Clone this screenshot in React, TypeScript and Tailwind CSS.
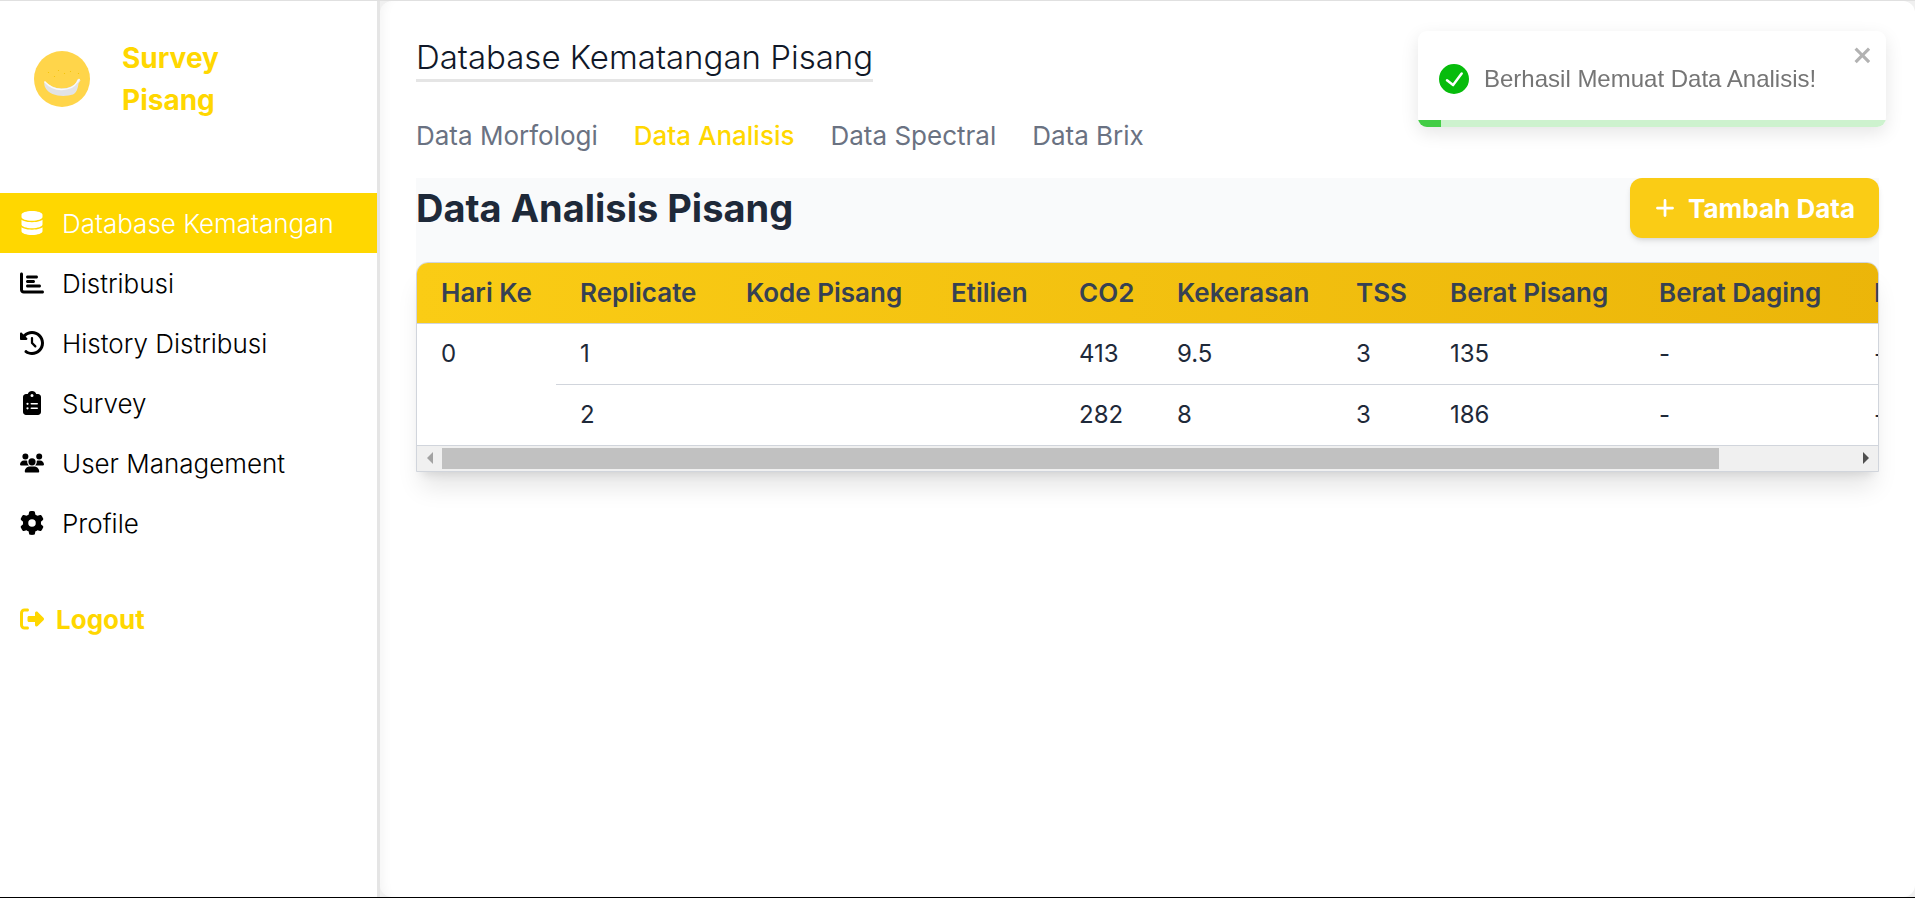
import { useState } from 'react'
import {
  FaChartBar, FaClipboardList, FaClockRotateLeft, FaDatabase,
  FaGear, FaPlus, FaRightFromBracket, FaUsers,
} from 'react-icons/fa6'

const menu = [
  { nama: 'Database Kematangan', icon: FaDatabase },
  { nama: 'Distribusi', icon: FaChartBar },
  { nama: 'History Distribusi', icon: FaClockRotateLeft },
  { nama: 'Survey', icon: FaClipboardList },
  { nama: 'User Management', icon: FaUsers },
  { nama: 'Profile', icon: FaGear },
]

const tabs = ['Data Morfologi', 'Data Analisis', 'Data Spectral', 'Data Brix']

const kolom = [
  { label: 'Hari Ke', lebar: 139 },
  { label: 'Replicate', lebar: 166 },
  { label: 'Kode Pisang', lebar: 205 },
  { label: 'Etilien', lebar: 128 },
  { label: 'CO2', lebar: 98 },
  { label: 'Kekerasan', lebar: 179 },
  { label: 'TSS', lebar: 94 },
  { label: 'Berat Pisang', lebar: 209 },
  { label: 'Berat Daging', lebar: 215 },
  { label: 'Berat Kulit', lebar: 185 },
]

const dataAnalisis = [
  { hari: 0, baris: [
    ['1', '', '', '413', '9.5', '3', '135', '-', '-'],
    ['2', '', '', '282', '8', '3', '186', '-', '-'],
  ] },
]

function Logo() {
  return (
    <svg viewBox="0 0 56 56" className="size-14 shrink-0" aria-hidden="true">
      <circle cx="28" cy="28" r="28" fill="#ffd54a" />
      <g fill="#f2c200">
        <circle cx="14.5" cy="21.5" r=".6" />
        <circle cx="24.5" cy="19.5" r=".6" />
        <circle cx="20.5" cy="25.5" r=".6" />
        <circle cx="30.5" cy="22.5" r=".6" />
        <circle cx="36.5" cy="20.5" r=".6" />
        <circle cx="44.5" cy="22.5" r=".6" />
      </g>
      <path d="M10.5 30.500C15 34.500 21 37.500 27.500 37.500C35 37.500 40.500 34.500 42.500 31L43.200 28.500L45.500 28L46.500 29.500L44.500 32.500C44 37 42.500 42 39 43.500C31 46 15.500 46 11 36C10.200 34 10 31.500 10.500 30.500Z" fill="#e2e3e6" />
      <path d="M10.5 30.500C15 35.500 21 38.500 27.500 38.500C35 38.500 40.500 35.500 43 31.500L45.500 28" fill="none" stroke="#fafafa" strokeWidth="1.4" />
    </svg>
  )
}

function Sidebar() {
  return (
    <aside className="w-[380px] shrink-0 border-r-[3px] border-[#e5e5e5] bg-white">
      <div className="flex items-center gap-8 px-[34px] pt-[36px]">
        <Logo />
        <p className="w-28 text-[28px] leading-[42px] font-bold text-[#ffd700]">Survey Pisang</p>
      </div>
      <nav className="mt-[72px]">
        {menu.map(({ nama, icon: Icon }, i) => (
          <a key={nama} href="#"
            className={`flex h-15 items-center gap-[18px] px-5 text-[26px] font-light ${i === 0 ? 'bg-[#ffd700] text-white' : 'text-black'}`}>
            <Icon className="size-6 shrink-0" />
            {nama}
          </a>
        ))}
      </nav>
      <button className="mt-9 flex h-15 items-center gap-3 px-5 text-[26px] font-bold text-[#ffd700]">
        <FaRightFromBracket className="size-6" />
        Logout
      </button>
    </aside>
  )
}

function TabelAnalisis() {
  return (
    <div className="overflow-hidden rounded-t-xl border border-gray-300 bg-white shadow-xl">
      <div className="overflow-hidden">
        <table className="w-[1618px] table-fixed border-collapse text-left text-[24px] whitespace-nowrap text-gray-800">
          <colgroup>
            {kolom.map((k) => <col key={k.label} style={{ width: k.lebar }} />)}
          </colgroup>
          <thead>
            <tr className="h-15 bg-linear-to-r from-[#facc15] to-[#eab308] text-[26px] text-gray-700">
              {kolom.map((k) => <th key={k.label} className="px-6 font-semibold">{k.label}</th>)}
            </tr>
          </thead>
          <tbody>
            {dataAnalisis.map((d) => d.baris.map((baris, i) => (
              <tr key={`${d.hari}-${i}`} className="h-[61px]">
                {i === 0 && (
                  <td rowSpan={d.baris.length} className="border-y border-gray-300 px-6 pt-3 align-top">{d.hari}</td>
                )}
                {baris.map((nilai, j) => (
                  <td key={j} className="border-y border-gray-300 px-6">{nilai}</td>
                ))}
              </tr>
            )))}
          </tbody>
        </table>
      </div>
      {/* Scroll horizontal */}
      <div className="flex h-[25px] items-center bg-[#f0f0f0]">
        <button aria-label="Geser kiri" className="flex h-full w-[25px] shrink-0 items-center justify-center">
          <svg viewBox="0 0 6 12" className="h-3 w-1.5" fill="#a3a3a3"><path d="M6 0v12L0 6z" /></svg>
        </button>
        <div className="h-[21px] flex-1">
          <div className="h-full w-[90.5%] bg-[#c1c1c1]" />
        </div>
        <button aria-label="Geser kanan" className="flex h-full w-[25px] shrink-0 items-center justify-center">
          <svg viewBox="0 0 6 12" className="h-3 w-1.5" fill="#505050"><path d="M0 0v12l6-6z" /></svg>
        </button>
      </div>
    </div>
  )
}

function Toast({ onClose }: { onClose: () => void }) {
  return (
    <div role="alert"
      className="fixed top-[31px] right-[29px] w-[468px] overflow-hidden rounded-[9px] bg-white font-['Liberation_Sans',sans-serif] shadow-[0_6px_18px_rgba(0,0,0,0.1)]">
      <div className="flex h-[89px] items-center gap-[15px] px-[21px] pt-[7px]">
        <svg viewBox="0 0 24 24" className="size-[30px] shrink-0" fill="#07bc0c">
          <path d="M12 0a12 12 0 1012 12A12.014 12.014 0 0012 0zm6.927 8.200l-6.845 9.289a1.011 1.011 0 01-1.430.188l-4.888-3.908a1 1 0 111.250-1.562l4.076 3.261 6.227-8.451a1 1 0 111.610 1.183z" />
        </svg>
        <p className="text-[24px] whitespace-nowrap text-[#757575]">Berhasil Memuat Data Analisis!</p>
      </div>
      <button aria-label="Tutup" onClick={onClose} className="absolute top-3 right-3 text-[#b2b2b2]">
        <svg viewBox="0 0 14 16" className="h-6 w-[21px]" fill="currentColor">
          <path fillRule="evenodd" d="M7.710 8.230l3.750 3.750-1.480 1.480-3.750-3.750-3.750 3.750L1 11.980l3.750-3.750L1 4.480 2.480 3l3.750 3.750L9.980 3l1.480 1.480-3.750 3.750z" />
        </svg>
      </button>
      <div className="h-[7px] bg-[#cdf2ce]">
        <div className="h-full w-[5%] bg-[#43cd46]" />
      </div>
    </div>
  )
}

export default function App() {
  const [tab, setTab] = useState('Data Analisis')
  const [toast, setToast] = useState(true)

  return (
    <div className="flex min-h-screen border-t border-b border-t-[#e0e0e0] border-b-black bg-[#f0f0f0] font-['Inter',sans-serif]">
      <Sidebar />
      <main className="min-w-0 flex-1 rounded-xl bg-white px-9 pt-[34px] shadow-[inset_12px_0_12px_-10px_rgba(0,0,0,0.05)]">
        <h1 className="w-fit border-b-[3px] border-[#e5e5e5] text-[33px] leading-[44px] font-light text-gray-900">
          Database Kematangan Pisang
        </h1>

        <div className="mt-9 flex gap-9">
          {tabs.map((t) => (
            <button key={t} onClick={() => setTab(t)}
              className={`text-[26px] leading-9 ${t === tab ? 'font-medium text-[#ffd700]' : 'text-gray-500'}`}>
              {t}
            </button>
          ))}
        </div>

        <section className="mt-6 bg-gray-50">
          <div className="flex items-center justify-between pb-6">
            <h2 className="text-[38px] leading-[60px] font-bold text-gray-800">Data Analisis Pisang</h2>
            <button className="flex h-15 items-center gap-3 rounded-xl bg-[#facc15] px-6 text-[26px] font-bold text-white shadow-md">
              <FaPlus className="size-[22px]" />
              Tambah Data
            </button>
          </div>
          <TabelAnalisis />
        </section>
      </main>
      {toast && <Toast onClose={() => setToast(false)} />}
    </div>
  )
}
